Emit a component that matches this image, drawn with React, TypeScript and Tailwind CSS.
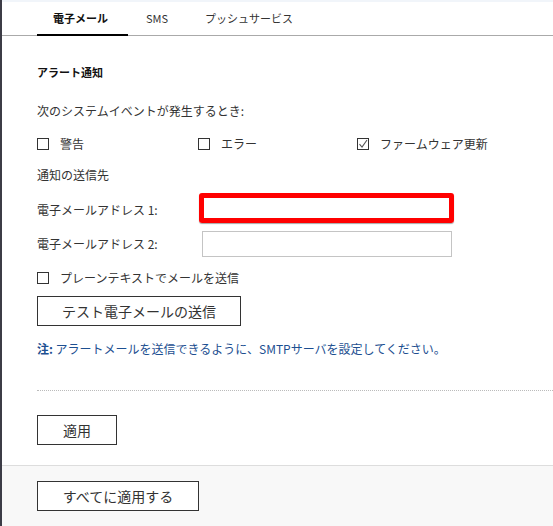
import { useState } from "react"

const font = { fontFamily: '"Noto Sans CJK JP", "Noto Sans", sans-serif' }

function Box({ checked }: { checked?: boolean }) {
  return (
    <span className="relative inline-block w-[12px] h-[12px] border border-[#333] bg-white shrink-0">
      {checked && (
        <svg viewBox="0 0 12 12" className="absolute -left-px -top-px w-[12px] h-[12px]">
          <path d="M2.5 6.2 L5 9 L10 2" fill="none" stroke="#555" strokeWidth="1.1" />
        </svg>
      )}
    </span>
  )
}

function Check({ label, checked, className }: { label: string; checked?: boolean; className?: string }) {
  return (
    <label className={`flex items-center gap-[11px] h-4 ${className ?? ""}`}>
      <Box checked={checked} />
      <span>{label}</span>
    </label>
  )
}

export default function App() {
  const [tab, setTab] = useState(0)
  const tabs = ["電子メール", "SMS", "プッシュサービス"]

  return (
    <div
      className="min-h-[526px] w-[553px] bg-white border-l-2 border-[#3c3c46] text-[12px] leading-4 text-[#333] flex flex-col overflow-hidden"
      style={font}
    >
      <div className="h-[2px] bg-[#f1f5fa]" />

      {/* tabs */}
      <div className="h-[34px] flex items-end pl-[35px] border-b border-[#aaa] text-[11px]">
        {tabs.map((t, i) => (
          <button
            key={t}
            onClick={() => setTab(i)}
            className={
              "h-[26px] -mb-px flex items-start " +
              (i === 0 ? "w-[91px] pl-[16px] " : i === 1 ? "w-[77px] pl-[18px] " : "pl-0 ") +
              (tab === i ? "border-b-2 border-black font-bold text-[#111]" : "text-[#333]")
            }
          >
            {t}
          </button>
        ))}
      </div>

      <div className="pl-[35px] flex flex-col">
        <div className="mt-[28px] font-bold text-[11px] text-[#111]">アラート通知</div>

        <div className="mt-[23px]">次のシステムイベントが発生するとき:</div>

        <div className="mt-[17px] flex">
          <Check label="警告" className="w-[161px]" />
          <Check label="エラー" className="w-[159px]" />
          <Check label="ファームウェア更新" checked />
        </div>

        <div className="mt-[15px]">通知の送信先</div>

        <div className="mt-[14px] flex items-center h-[26px]">
          <span className="w-[165px]">電子メールアドレス 1:</span>
          <div className="relative w-[250px] h-[26px]">
            <input className="w-full h-full border border-[#c4c4c4] outline-none px-2" />
            <div className="absolute left-[-3px] top-[-4px] w-[255px] h-[30px] border-[5px] border-[#ff0000] rounded-[3px] shadow-[0_1px_1px_rgba(0,0,0,0.35)] pointer-events-none" />
          </div>
        </div>

        <div className="mt-[8px] flex items-center h-[26px]">
          <span className="w-[165px]">電子メールアドレス 2:</span>
          <input className="w-[250px] h-[26px] border border-[#c4c4c4] outline-none px-2" />
        </div>

        <Check label="プレーンテキストでメールを送信" className="mt-[13px]" />

        <button className="mt-[10px] w-[204px] h-[30px] border-[1.5px] border-[#333] text-[14px] text-[#333]">
          テスト電子メールの送信
        </button>

        <p className="mt-[15px] text-[#1d4f91]">
          <span className="font-bold">注:</span> アラートメールを送信できるように、SMTPサーバを設定してください。
        </p>

        <div className="mt-[33px] border-t border-dotted border-[#bbb]" />

        <button className="mt-[24px] mb-[20px] w-[80px] h-[30px] border-[1.5px] border-[#333] text-[14px] text-[#333]">
          適用
        </button>
      </div>

      <div className="flex-1 bg-[#f8f8f8] border-t border-[#ddd] pl-[35px] pt-[15px]">
        <button className="w-[162px] h-[30px] border-[1.5px] border-[#333] bg-white text-[14px] text-[#333]">
          すべてに適用する
        </button>
      </div>
    </div>
  )
}
